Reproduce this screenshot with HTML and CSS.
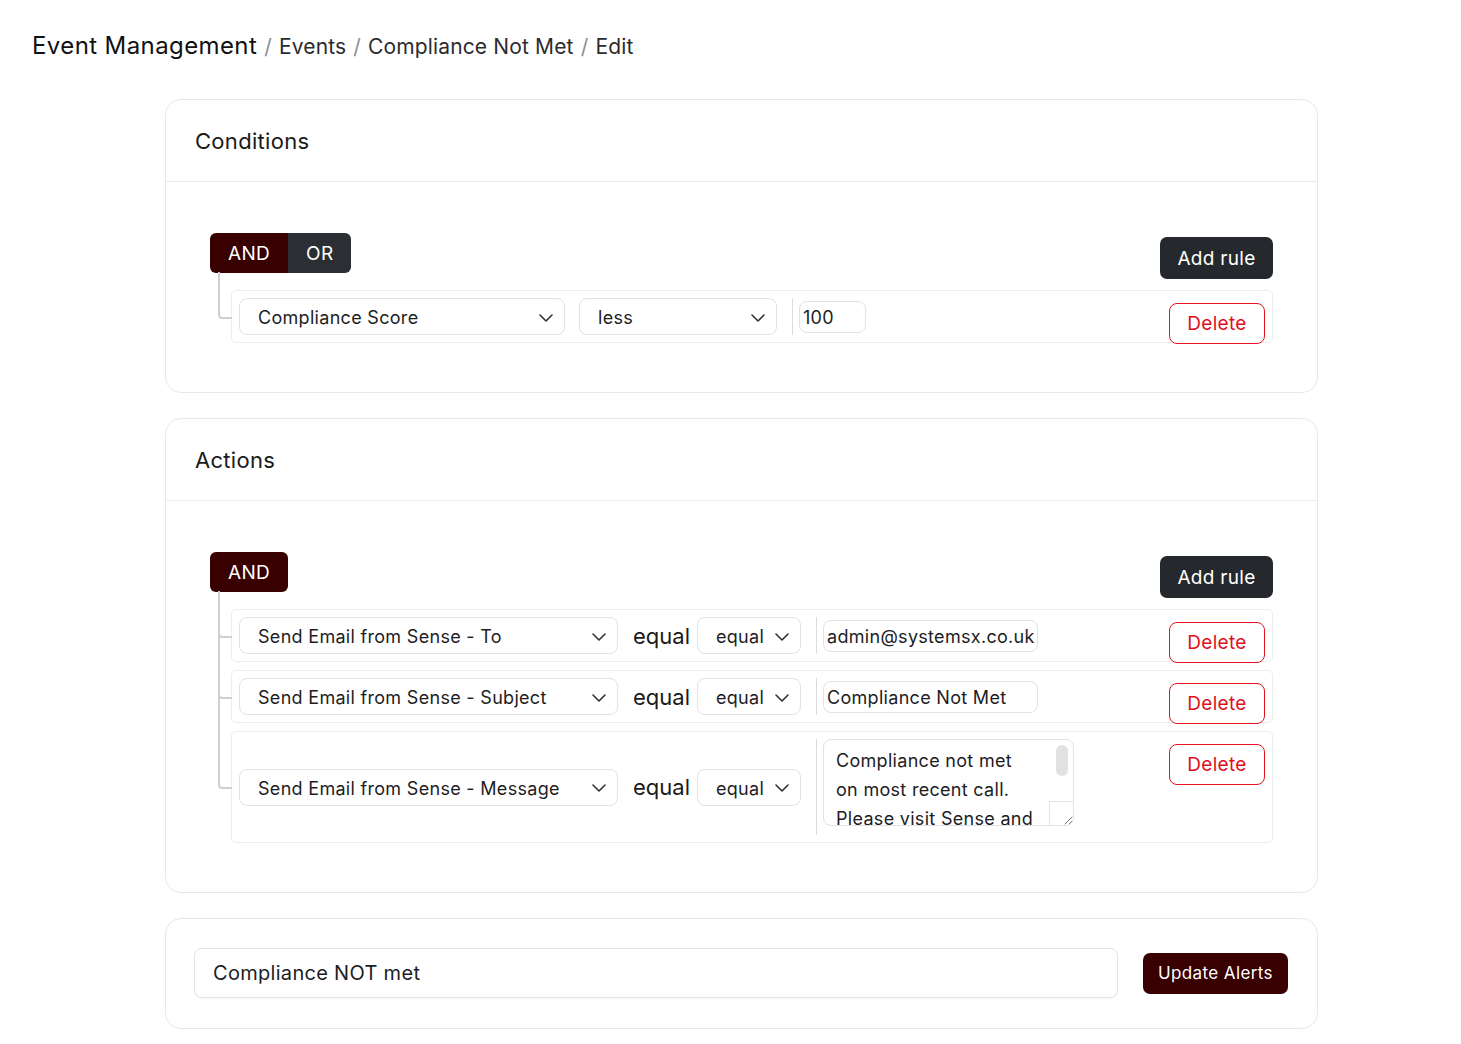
FILE: index.html
```html
<!DOCTYPE html>
<html lang="en">
  <head>
    <meta charset="UTF-8" />
    <title>Compliance Not Met - Edit</title>
    <link rel="stylesheet" href="styles.css">
  </head>
  <body>
    <nav class="breadcrumb">
      <span class="crumb-root">Event Management</span>
      <span class="sep">/</span>
      <span class="crumb">Events</span>
      <span class="sep">/</span>
      <span class="crumb">Compliance Not Met</span>
      <span class="sep">/</span>
      <span class="crumb">Edit</span>
    </nav>

    <main class="content">
      <!-- Conditions -->
      <section class="card">
        <div class="card-header">Conditions</div>
        <div class="card-body">
          <div class="rule-group">
            <div class="group-header">
              <div class="combinator">
                <button class="comb active">AND</button>
                <button class="comb">OR</button>
              </div>
              <button class="btn-add">Add rule</button>
            </div>
            <div class="rules">
              <div class="rule">
                <div class="select w-score">
                  <span>Compliance Score</span>
                  <svg width="14" height="8" viewBox="0 0 14 8"><path d="M1 1l6 6 6-6" fill="none" stroke="#333" stroke-width="1.6" stroke-linecap="round" stroke-linejoin="round"/></svg>
                </div>
                <div class="select w-op">
                  <span>less</span>
                  <svg width="14" height="8" viewBox="0 0 14 8"><path d="M1 1l6 6 6-6" fill="none" stroke="#333" stroke-width="1.6" stroke-linecap="round" stroke-linejoin="round"/></svg>
                </div>
                <div class="value">
                  <input class="value-input w-num" type="text" value="100" />
                </div>
                <button class="btn-delete">Delete</button>
              </div>
            </div>
          </div>
        </div>
      </section>

      <!-- Actions -->
      <section class="card">
        <div class="card-header">Actions</div>
        <div class="card-body">
          <div class="rule-group">
            <div class="group-header">
              <div class="combinator">
                <button class="comb active">AND</button>
              </div>
              <button class="btn-add">Add rule</button>
            </div>
            <div class="rules">
              <div class="rule">
                <div class="select w-field">
                  <span>Send Email from Sense - To</span>
                  <svg width="14" height="8" viewBox="0 0 14 8"><path d="M1 1l6 6 6-6" fill="none" stroke="#333" stroke-width="1.6" stroke-linecap="round" stroke-linejoin="round"/></svg>
                </div>
                <span class="op-label">equal</span>
                <div class="select w-eq">
                  <span>equal</span>
                  <svg width="14" height="8" viewBox="0 0 14 8"><path d="M1 1l6 6 6-6" fill="none" stroke="#333" stroke-width="1.6" stroke-linecap="round" stroke-linejoin="round"/></svg>
                </div>
                <div class="value">
                  <input class="value-input w-text" type="text" value="admin@systemsx.co.uk" />
                </div>
                <button class="btn-delete">Delete</button>
              </div>

              <div class="rule">
                <div class="select w-field">
                  <span>Send Email from Sense - Subject</span>
                  <svg width="14" height="8" viewBox="0 0 14 8"><path d="M1 1l6 6 6-6" fill="none" stroke="#333" stroke-width="1.6" stroke-linecap="round" stroke-linejoin="round"/></svg>
                </div>
                <span class="op-label">equal</span>
                <div class="select w-eq">
                  <span>equal</span>
                  <svg width="14" height="8" viewBox="0 0 14 8"><path d="M1 1l6 6 6-6" fill="none" stroke="#333" stroke-width="1.6" stroke-linecap="round" stroke-linejoin="round"/></svg>
                </div>
                <div class="value">
                  <input class="value-input w-text" type="text" value="Compliance Not Met" />
                </div>
                <button class="btn-delete">Delete</button>
              </div>

              <div class="rule">
                <div class="select w-field">
                  <span>Send Email from Sense - Message</span>
                  <svg width="14" height="8" viewBox="0 0 14 8"><path d="M1 1l6 6 6-6" fill="none" stroke="#333" stroke-width="1.6" stroke-linecap="round" stroke-linejoin="round"/></svg>
                </div>
                <span class="op-label">equal</span>
                <div class="select w-eq">
                  <span>equal</span>
                  <svg width="14" height="8" viewBox="0 0 14 8"><path d="M1 1l6 6 6-6" fill="none" stroke="#333" stroke-width="1.6" stroke-linecap="round" stroke-linejoin="round"/></svg>
                </div>
                <div class="value value-tall">
                  <div class="message">
                    <div class="message-text">Compliance not met<br />on most recent call.<br />Please visit Sense and</div>
                    <span class="scroll-thumb"></span>
                    <span class="resize-corner">
                      <svg width="12" height="12" viewBox="0 0 12 12"><path d="M11 4L4 11M11 8L8 11" stroke="#777" stroke-width="1" stroke-linecap="round"/></svg>
                    </span>
                  </div>
                </div>
                <button class="btn-delete">Delete</button>
              </div>
            </div>
          </div>
        </div>
      </section>

      <!-- Name + submit -->
      <section class="card card-footer">
        <input class="name-input" type="text" value="Compliance NOT met" />
        <button class="btn-submit">Update Alerts</button>
      </section>
    </main>
  </body>
</html>
```

FILE: styles.css
```css
body {
  margin: 0;
  background: #fff;
  font-family: Inter, "Noto Sans", Arial, sans-serif;
  color: #1d1d1f;
  letter-spacing: 0.3px;
}
button,
input {
  font-family: inherit;
  letter-spacing: inherit;
}

/* breadcrumb */
.breadcrumb {
  display: flex;
  align-items: baseline;
  gap: 7px;
  padding: 31px 32px 0 32px;
  height: 30px;
  margin-bottom: 38px;
  font-size: 21px;
  letter-spacing: 0.15px;
  color: #2c2c2e;
}
.crumb-root {
  font-size: 24px;
  letter-spacing: 0.4px;
  color: #111;
}
.sep {
  color: #8e8e93;
}

/* cards */
.content {
  width: 1153px;
  margin-left: 165px;
}
.card {
  border: 1px solid #e8e8e8;
  border-radius: 16px;
  margin-bottom: 25px;
  background: #fff;
}
.card-header {
  height: 81px;
  display: flex;
  align-items: center;
  padding: 0 29px;
  border-bottom: 1px solid #ebebeb;
  font-size: 22px;
  color: #1a1a1a;
}
.card-body {
  padding: 51px 44px 49px 44px;
}

/* rule group */
.group-header {
  display: flex;
  justify-content: space-between;
  align-items: flex-start;
}
.combinator {
  display: flex;
  border-radius: 6px;
  overflow: hidden;
}
.comb {
  height: 40px;
  padding: 0 18px;
  border: none;
  background: #2b2e33;
  color: #fff;
  font-size: 19px;
}
.comb.active {
  background: #380000;
}
.btn-add {
  margin-top: 4px;
  height: 42px;
  width: 113px;
  border: none;
  border-radius: 7px;
  background: #25282c;
  color: #fff;
  font-size: 19px;
}
.rules {
  margin-top: 11px;
  padding-left: 21px;
}
.rule {
  position: relative;
  display: flex;
  align-items: center;
  padding: 7px 7px;
  border: 1px solid #ececec;
  border-radius: 5px;
  margin-bottom: 8px;
}
.rule:last-child {
  margin-bottom: 0;
}
/* branch lines */
.rule::before {
  content: "";
  position: absolute;
  left: -14px;
  top: -10px;
  width: 12px;
  height: calc(50% + 10px);
  border-left: 2px solid #cfcfcf;
  border-bottom: 2px solid #cfcfcf;
  border-bottom-left-radius: 4px;
}
.rule:first-child::before {
  top: -19px;
  height: calc(50% + 19px);
}
.rule:not(:last-child)::after {
  content: "";
  position: absolute;
  left: -14px;
  top: 50%;
  bottom: -10px;
  border-left: 2px solid #cfcfcf;
}

/* controls */
.select {
  box-sizing: border-box;
  height: 37px;
  display: flex;
  align-items: center;
  justify-content: space-between;
  padding: 2px 11px 0 18px;
  border: 1px solid #e2e2e2;
  border-radius: 8px;
  font-size: 18px;
  color: #1d1d1f;
  flex-shrink: 0;
}
.select + .select {
  margin-left: 14px;
}
.w-score { width: 326px; }
.w-op { width: 198px; }
.w-field { width: 379px; }
.w-eq { width: 104px; }

.op-label {
  margin: 0 7px 0 15px;
  font-size: 22px;
  letter-spacing: 0;
  color: #1a1a1a;
}
.value {
  height: 37px;
  display: flex;
  align-items: center;
  margin-left: 15px;
  padding-left: 6px;
  border-left: 1px solid #dcdcdc;
}
.value-tall {
  height: 96px;
  align-items: flex-start;
}
.value-input {
  box-sizing: border-box;
  height: 32px;
  padding: 2px 3px 0;
  border: 1px solid #e2e2e2;
  border-radius: 8px;
  font-size: 18px;
  color: #1d1d1f;
  outline: none;
}
.w-num { width: 67px; }
.w-text { width: 215px; }

.message {
  position: relative;
  box-sizing: border-box;
  width: 251px;
  height: 87px;
  padding: 6px 30px 0 12px;
  border: 1px solid #e2e2e2;
  border-radius: 8px;
  overflow: hidden;
  font-size: 18px;
  line-height: 29px;
  color: #1d1d1f;
}
.message-text {
  white-space: nowrap;
}
.scroll-thumb {
  position: absolute;
  right: 5px;
  top: 5px;
  width: 12px;
  height: 31px;
  border-radius: 6px;
  background: #e1e1e3;
}
.resize-corner {
  position: absolute;
  right: 0;
  bottom: 0;
  width: 24px;
  height: 24px;
  box-sizing: border-box;
  border-left: 1px solid #e4e4e4;
  border-top: 1px solid #e4e4e4;
  background: #fff;
  display: flex;
  align-items: flex-end;
  justify-content: flex-end;
}

.btn-delete {
  align-self: flex-start;
  margin: 5px 0 -10px auto;
  width: 96px;
  height: 41px;
  border: 1px solid #e3141f;
  border-radius: 8px;
  background: #fff;
  color: #e0101b;
  font-size: 19px;
}

/* footer card */
.card-footer {
  display: flex;
  align-items: center;
  padding: 29px 29px 30px 28px;
  gap: 25px;
}
.name-input {
  flex: 1;
  box-sizing: border-box;
  height: 50px;
  padding: 0 18px;
  border: 1px solid #e4e4e4;
  border-radius: 8px;
  box-shadow: 0 1px 2px rgba(0, 0, 0, 0.04);
  font-size: 20px;
  color: #1d1d1f;
  outline: none;
}
.btn-submit {
  height: 41px;
  padding: 0 15px;
  border: none;
  border-radius: 7px;
  background: #380000;
  color: #fff;
  font-size: 17px;
  letter-spacing: 0.4px;
}
```
